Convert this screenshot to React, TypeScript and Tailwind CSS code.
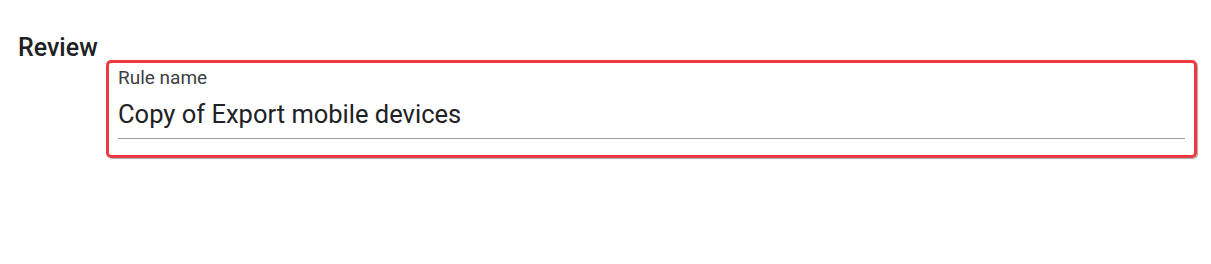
export default function App() {
  return (
    <div className="w-[1211px] h-[264px] bg-white" style={{ fontFamily: "Roboto, 'Liberation Sans', sans-serif" }}>
      <div className="pt-[33px] pl-[18px]">
        <h2 className="text-[25px] leading-[30px] font-medium text-[#202124]">Review</h2>
        <div className="ml-[88px] mt-[-3px] w-[1091px] h-[98px] border-[3px] border-[#ee3a3f] rounded-[5px] shadow-[1px_1px_1px_rgba(0,0,0,0.35)] pl-[9px] pr-[9px] pt-[4px]">
          <div className="text-[19px] leading-[22px] text-[#3c4043]">Rule name</div>
          <div className="mt-[9px] text-[25.5px] leading-[32px] text-[#202124]">Copy of Export mobile devices</div>
          <div className="mt-[8px] h-px bg-[#9e9e9e]" />
        </div>
      </div>
    </div>
  );
}
